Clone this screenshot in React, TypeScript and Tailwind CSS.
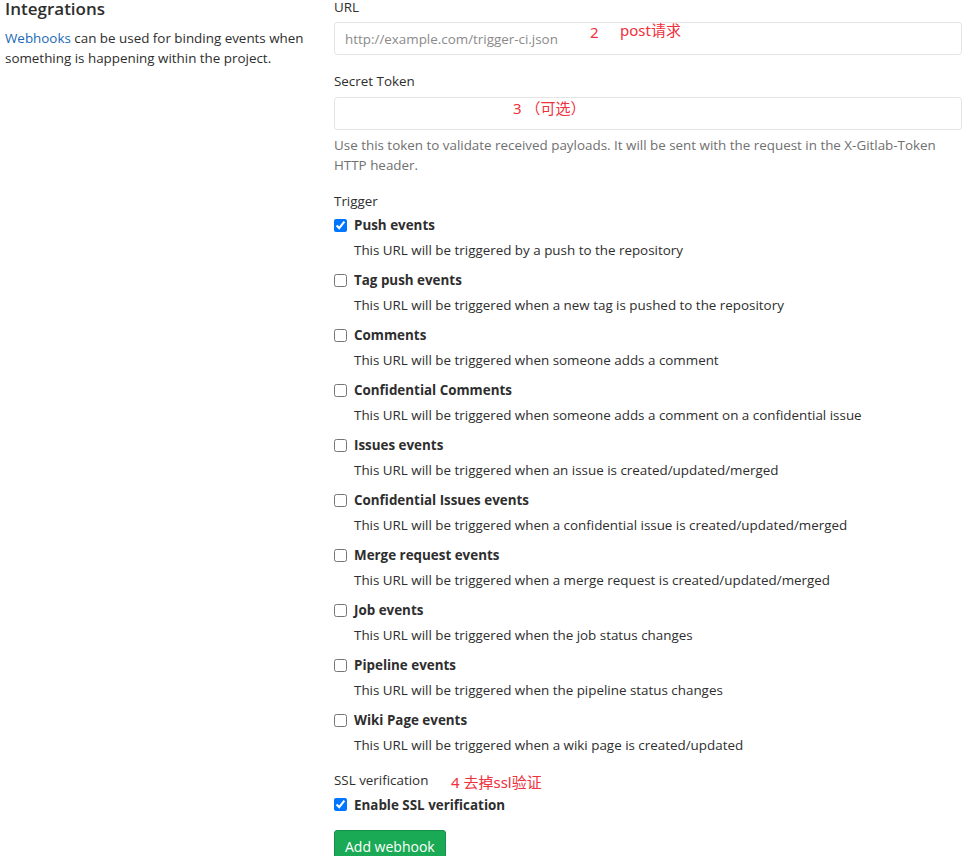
import React from 'react';

const TRIGGERS = [
  { label: 'Push events', desc: 'This URL will be triggered by a push to the repository', checked: true },
  { label: 'Tag push events', desc: 'This URL will be triggered when a new tag is pushed to the repository' },
  { label: 'Comments', desc: 'This URL will be triggered when someone adds a comment' },
  { label: 'Confidential Comments', desc: 'This URL will be triggered when someone adds a comment on a confidential issue' },
  { label: 'Issues events', desc: 'This URL will be triggered when an issue is created/updated/merged' },
  { label: 'Confidential Issues events', desc: 'This URL will be triggered when a confidential issue is created/updated/merged' },
  { label: 'Merge request events', desc: 'This URL will be triggered when a merge request is created/updated/merged' },
  { label: 'Job events', desc: 'This URL will be triggered when the job status changes' },
  { label: 'Pipeline events', desc: 'This URL will be triggered when the pipeline status changes' },
  { label: 'Wiki Page events', desc: 'This URL will be triggered when a wiki page is created/updated' },
];

const note = "absolute text-[15px] text-[#f0303a] font-['Noto_Sans','Noto_Sans_CJK_SC',sans-serif] whitespace-nowrap leading-none";

export default function App() {
  return (
    <div className="w-[969px] h-[856px] overflow-hidden bg-white text-[#2e2e2e] font-['Open_Sans','Noto_Sans_CJK_SC',sans-serif] text-[13.4px] flex">
      {/* Left column */}
      <div className="w-[334px] shrink-0 pl-[5px] pr-6">
        <h4 className="text-[17px] font-semibold leading-[18px] text-[#2e2e2e]">Integrations</h4>
        <p className="mt-[10px] leading-[20px]">
          <a href="#" className="text-[#1b69b6]">Webhooks</a> can be used for binding events when something is happening within the project.
        </p>
      </div>

      {/* Right column */}
      <div className="flex-1 pr-[7px] relative">
        <label className="block leading-none mt-[1px]">URL</label>
        <div className="relative mt-[8px]">
          <input
            className="w-full h-[33px] border border-[#e5e5e5] rounded-[3px] px-[10px] text-[13.4px] placeholder:text-[#8a8a8a] outline-none"
            placeholder="http://example.com/trigger-ci.json"
          />
          <span className={note + ' left-[256px] top-[3px]'}>2</span>
          <span className={note + ' left-[286px] top-[1px]'}>post请求</span>
        </div>

        <label className="block leading-none mt-[20px]">Secret Token</label>
        <div className="relative mt-[8px]">
          <input className="w-full h-[33px] border border-[#e5e5e5] rounded-[3px] px-[10px] outline-none" />
          <span className={note + ' left-[179px] top-[4px]'}>3 （可选）</span>
        </div>
        <p className="mt-[5px] leading-[20px] text-[#707070] pr-[20px]">
          Use this token to validate received payloads. It will be sent with the request in the X-Gitlab-Token HTTP header.
        </p>

        <label className="block leading-none mt-[20px]">Trigger</label>
        <div className="mt-[7px] flex flex-col">
          {TRIGGERS.map((t) => (
            <div key={t.label} className="h-[55px]">
              <label className="flex items-center gap-[7px] font-bold leading-[20px]">
                <input type="checkbox" defaultChecked={t.checked} className="w-[13px] h-[13px] m-0 accent-[#0075ff]" />
                {t.label}
              </label>
              <p className="pl-[20px] mt-[5px] leading-[20px]">{t.desc}</p>
            </div>
          ))}
        </div>

        <div className="relative">
          <label className="block leading-none mt-[9px]">SSL verification</label>
          <span className={note + ' left-[117px] top-[1px]'}>4 去掉ssl验证</span>
          <label className="flex items-center gap-[7px] font-bold leading-[20px] mt-[7px]">
            <input type="checkbox" defaultChecked className="w-[13px] h-[13px] m-0 accent-[#0075ff]" />
            Enable SSL verification
          </label>
        </div>

        <button className="mt-[15px] bg-[#1aaa55] border border-[#168f48] text-white text-[14px] rounded-[3px] px-[10px] h-[34px] leading-none">
          Add webhook
        </button>
      </div>
    </div>
  );
}
